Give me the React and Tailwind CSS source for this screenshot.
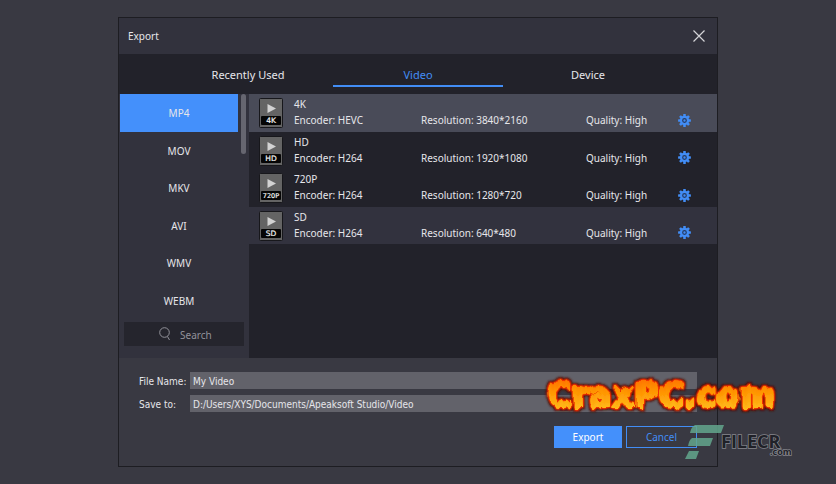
import { useState } from "react";

const formats = ["MP4", "MOV", "MKV", "AVI", "WMV", "WEBM"];

const presets = [
  { name: "4K", encoder: "HEVC", resolution: "3840*2160", row: "bg-[#494b58]" },
  { name: "HD", encoder: "H264", resolution: "1920*1080", row: "bg-[#22222a]" },
  { name: "720P", encoder: "H264", resolution: "1280*720", row: "bg-[#22222a]" },
  { name: "SD", encoder: "H264", resolution: "640*480", row: "bg-[#32323e]" },
];

function PresetIcon({ label }) {
  return (
    <svg width="24" height="30" viewBox="0 0 24 30" aria-hidden="true" className="shrink-0">
      <rect x="0.5" y="0.5" width="23" height="29" rx="1" fill="#646464" stroke="#17171b" />
      <path d="M8.500 6 L17 10.500 L8.500 15 Z" fill="#d2d2d2" />
      <rect x="2" y="18" width="20" height="9" rx="1" fill="#050505" />
      <text x="12" y="25" textAnchor="middle" fontFamily="'DejaVu Sans', sans-serif" fontSize={label.length > 2 ? 6.5 : 7.5} fill="#f4f4f4" stroke="#f4f4f4" strokeWidth="0.200">
        {label}
      </text>
    </svg>
  );
}

function GearIcon() {
  return (
    <svg width="13" height="13" viewBox="0 0 13 13" aria-hidden="true">
      <g fill="#428df5">
        {[0, 45, 90, 135].map((a) => (
          <rect key={a} x="5.200" y="0.100" width="2.600" height="12.800" rx="0.500" transform={`rotate(${a} 6.5 6.5)`} />
        ))}
        <circle cx="6.500" cy="6.500" r="4.700" />
      </g>
      <circle cx="6.500" cy="6.500" r="1.800" fill="#428df5" stroke="#263a60" strokeWidth="1.200" />
    </svg>
  );
}

function FlameLogo() {
  return (
    <svg width="240" height="54" viewBox="0 0 240 54" className="pointer-events-none absolute right-[56px] top-[367px]">
      <defs>
        <linearGradient id="flame" gradientUnits="userSpaceOnUse" x1="0" y1="10" x2="0" y2="44">
          <stop offset="0" stopColor="#ff6a00" />
          <stop offset="0.400" stopColor="#ff9200" />
          <stop offset="1" stopColor="#ffc01c" />
        </linearGradient>
        <filter id="fire" filterUnits="userSpaceOnUse" x="0" y="0" width="240" height="54">
          <feTurbulence type="fractalNoise" baseFrequency="0.250 0.030" numOctaves="1" seed="7" result="noise" />
          <feDisplacementMap in="SourceGraphic" in2="noise" scale="9" xChannelSelector="B" yChannelSelector="G" result="face" />
          <feGaussianBlur in="face" stdDeviation="0.900" result="d1s" />
          <feComponentTransfer in="d1s" result="d1a">
            <feFuncA type="linear" slope="3" intercept="0" />
          </feComponentTransfer>
          <feFlood floodColor="#f03000" />
          <feComposite in2="d1a" operator="in" result="red" />
          <feMorphology in="face" operator="dilate" radius="2" result="d2" />
          <feGaussianBlur in="d2" stdDeviation="0.800" result="d2s" />
          <feFlood floodColor="#4c1604" />
          <feComposite in2="d2s" operator="in" result="brown" />
          <feMerge>
            <feMergeNode in="brown" />
            <feMergeNode in="red" />
            <feMergeNode in="face" />
          </feMerge>
        </filter>
      </defs>
      <text
        x="7"
        y="40"
        fontFamily="'DejaVu Sans', sans-serif"
        fontWeight="bold"
        fontSize="34"
        fill="url(#flame)"
        stroke="url(#flame)"
        strokeWidth="2"
        strokeLinejoin="round"
        filter="url(#fire)"
      >
        CraxPC.com
      </text>
    </svg>
  );
}

function FileMark() {
  return (
    <svg width="108" height="36" viewBox="0 0 108 36" className="pointer-events-none absolute right-[43px] top-[424px]">
      <g fill="#63a68c" fillOpacity="0.850">
        <path d="M10 1 H39 L36 9 H5 Q6 3 10 1 Z" />
        <path d="M7 14 H28 L25 22 H3 Q4 16 7 14 Z" />
        <path d="M4 27 H14 L11 35 H0 Z" />
      </g>
      <g fontFamily="'Open Sans', sans-serif" fontWeight="bold" fill="#202128" stroke="#85868c" strokeWidth="1.500" paintOrder="stroke">
        <text x="36" y="24" fontSize="18">FILECR</text>
        <text x="85" y="31" fontSize="9">.com</text>
      </g>
    </svg>
  );
}

export default function App() {
  const [fileName, setFileName] = useState("My Video");
  const [folder, setFolder] = useState("D:/Users/XYS/Documents/Apeaksoft Studio/Video");

  return (
    <div className="relative min-h-screen bg-[#393942] px-[118px] py-[17px] font-['Noto_Sans',sans-serif] text-[10px] leading-4 text-[#e6e6ea]">
      <main className="border border-[#1d1d22] bg-[#393942]">
        <header className="flex h-9 items-center justify-between bg-[#32323d] pl-[9px] pr-3">
          <h1>Export</h1>
          <button aria-label="Close" className="text-[#d4d4d8]">
            <svg width="12" height="12" viewBox="0 0 12 12" stroke="currentColor" strokeWidth="1.200">
              <path d="M0.500 0.500 L11.500 11.500 M11.500 0.500 L0.500 11.500" />
            </svg>
          </button>
        </header>

        <nav className="flex h-10 bg-[#22222a] px-11 pb-[7px] text-[11px]">
          <button className="flex-1 border-b-2 border-transparent pt-[10px]">Recently Used</button>
          <button className="flex-1 border-b-2 border-[#428df5] pt-[10px] text-[#428df5]">Video</button>
          <button className="flex-1 border-b-2 border-transparent pt-[10px]">Device</button>
        </nav>

        <div className="flex">
          <aside className="w-[130px] shrink-0 bg-[#32323d] pb-3">
            <div className="flex justify-between pl-px pr-[3px]">
              <ul className="grid h-[225px] w-[118px] grid-rows-6">
                {formats.map((f, i) => (
                  <li key={f} className="flex">
                    <button className={i === 0 ? "flex-1 bg-[#4490fb] pt-px" : "flex-1 pt-px"}>{f}</button>
                  </li>
                ))}
              </ul>
              <div className="h-[60px] w-[5px] rounded-full bg-[#666670]" />
            </div>
            <label className="mx-[5px] mt-[3px] flex h-6 items-center bg-[#25252d] pl-[35px] text-[#92929a]">
              <svg width="13" height="14" viewBox="0 0 13 14" fill="none" stroke="currentColor" aria-hidden="true">
                <circle cx="5.500" cy="5.500" r="4.800" />
                <path d="M8.500 9.500 L10.500 13" />
              </svg>
              <input aria-label="Search" placeholder="Search" className="ml-2 w-14 bg-transparent pt-px outline-none placeholder:text-[#92929a]" />
            </label>
          </aside>

          <section className="min-w-0 flex-1 bg-[#22222a]">
            <ul className="grid h-[150px] grid-rows-4">
              {presets.map((p) => (
                <li key={p.name} className={`${p.row} flex pl-[10px]`}>
                  <div className="pt-1"><PresetIcon label={p.name} /></div>
                  <div className="ml-[11px] flex-1 pt-[2px]">
                    <h2>{p.name}</h2>
                    <div className="grid grid-cols-[127px_165px_1fr_39px]">
                      <span>Encoder: {p.encoder}</span>
                      <span>Resolution: {p.resolution}</span>
                      <span>Quality: High</span>
                      <button aria-label={`Settings for ${p.name}`} className="justify-self-start"><GearIcon /></button>
                    </div>
                  </div>
                </li>
              ))}
            </ul>
          </section>
        </div>

        <form className="px-5 pb-[18px] pt-[14px]" onSubmit={(e) => e.preventDefault()}>
          <div className="grid grid-cols-[51px_1fr] items-center gap-y-[6px] font-['DejaVu_Sans_Condensed','DejaVu_Sans',sans-serif]">
            <label htmlFor="file-name" className="pt-[2px] leading-[15px]">File Name:</label>
            <input id="file-name" value={fileName} onChange={(e) => setFileName(e.target.value)} className="h-[17px] bg-[#62626a] px-[3px] pt-[2px] leading-[15px] outline-none" />
            <label htmlFor="save-to" className="pt-[2px] leading-[15px]">Save to:</label>
            <input id="save-to" value={folder} onChange={(e) => setFolder(e.target.value)} className="h-[17px] bg-[#62626a] px-[3px] pt-[2px] leading-[15px] outline-none" />
          </div>
          <div className="mt-[14px] flex justify-end gap-1">
            <button type="submit" className="h-[22px] w-[68px] bg-[#4490fb] text-white">Export</button>
            <button type="button" className="h-[22px] w-[71px] border border-[#428df5] text-[#428df5]">Cancel</button>
          </div>
        </form>
      </main>
      <FileMark />
      <FlameLogo />
    </div>
  );
}
